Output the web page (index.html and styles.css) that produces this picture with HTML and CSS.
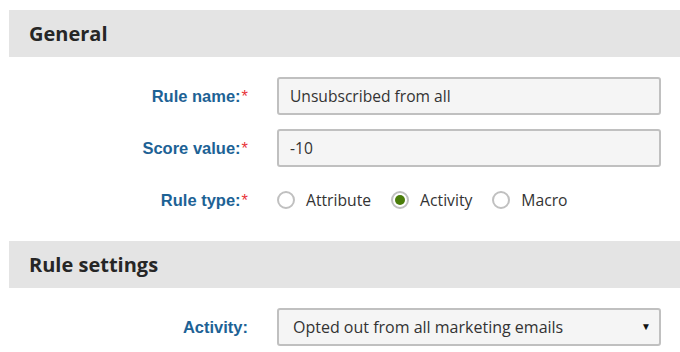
FILE: index.html
```html
<!DOCTYPE html>
<html lang="en">
<head>
    <meta charset="UTF-8">
    <title>Rule</title>
    <link rel="stylesheet" href="styles.css">
</head>
<body>
    <div class="page">
        <h2 class="section-title">General</h2>
        <div class="form">
            <div class="form-row">
                <label class="form-label" for="ruleName">Rule name:<span class="req">*</span></label>
                <input class="form-control" id="ruleName" type="text" value="Unsubscribed from all">
            </div>
            <div class="form-row">
                <label class="form-label" for="score">Score value:<span class="req">*</span></label>
                <input class="form-control" id="score" type="text" value="-10">
            </div>
            <div class="form-row">
                <span class="form-label">Rule type:<span class="req">*</span></span>
                <div class="radio-list">
                    <label class="radio"><input type="radio" name="ruletype"> Attribute</label>
                    <label class="radio"><input type="radio" name="ruletype" checked> Activity</label>
                    <label class="radio"><input type="radio" name="ruletype"> Macro</label>
                </div>
            </div>
        </div>

        <h2 class="section-title">Rule settings</h2>
        <div class="form">
            <div class="form-row">
                <label class="form-label" for="activity">Activity:</label>
                <div class="select-wrap">
                    <select class="form-control" id="activity">
                        <option>Opted out from all marketing emails</option>
                    </select>
                </div>
            </div>
        </div>
    </div>
</body>
</html>
```

FILE: styles.css
```css
:root {
    --label-color: #1d6295;
    --required-color: #e8343a;
    --header-bg: #e4e4e4;
    --text-color: #333;
    --border-color: #c0c0c0;
    --control-bg: #f5f5f5;
    --check-color: #4a7d0a;
}

* {
    margin: 0;
    padding: 0;
    box-sizing: border-box;
}

body {
    font-family: 'Open Sans', sans-serif;
    color: var(--text-color);
    background-color: white;
}

.page {
    padding: 10px 0 0 9px;
}

.section-title {
    height: 47px;
    padding-left: 20px;
    display: flex;
    align-items: center;
    background-color: var(--header-bg);
    color: #262626;
    font-size: 20px;
    font-weight: 700;
}

.form {
    display: flex;
    flex-direction: column;
    gap: 14px;
    padding: 20px 0 22px;
}

.form-row {
    display: grid;
    grid-template-columns: 239px 384px;
    column-gap: 29px;
    align-items: center;
    height: 38px;
}

.form-label {
    text-align: right;
    font-family: 'Liberation Sans', Arial, sans-serif;
    font-size: 16.5px;
    font-weight: 700;
    color: var(--label-color);
}

.req {
    color: var(--required-color);
    font-weight: 400;
    margin-left: 1px;
}

.form-control {
    width: 100%;
    height: 38px;
    padding: 0 11px;
    font-family: 'Open Sans', sans-serif;
    font-size: 15.6px;
    color: var(--text-color);
    background-color: var(--control-bg);
    border: 2px solid var(--border-color);
    border-radius: 3px;
    outline: none;
}

.radio-list {
    display: flex;
    align-items: center;
    gap: 20px;
}

.radio {
    display: flex;
    align-items: center;
    gap: 11px;
    font-size: 15.7px;
}

.radio input {
    appearance: none;
    width: 18px;
    height: 18px;
    border: 2px solid var(--border-color);
    border-radius: 50%;
    background-color: white;
    display: grid;
    place-items: center;
}

.radio input:checked::after {
    content: "";
    width: 10px;
    height: 10px;
    border-radius: 50%;
    background-color: var(--check-color);
}

.select-wrap {
    position: relative;
}

.select-wrap select {
    appearance: none;
    padding-left: 14px;
    font-size: 16px;
}

.select-wrap::after {
    content: "\25BC";
    position: absolute;
    right: 10px;
    top: 11px;
    font-size: 10px;
    color: #111;
    pointer-events: none;
}
```
